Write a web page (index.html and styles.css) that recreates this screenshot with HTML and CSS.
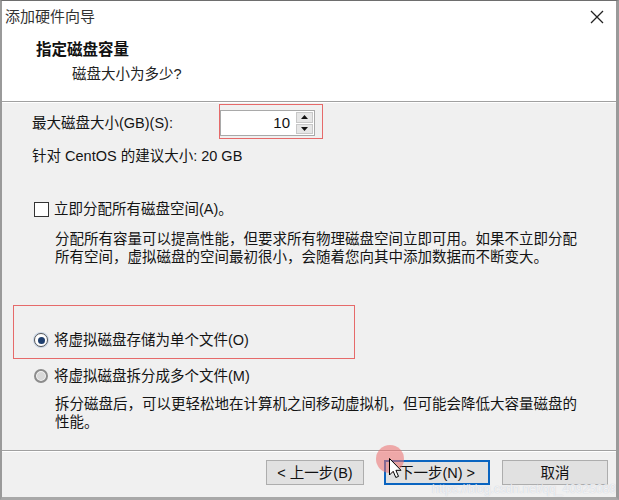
FILE: index.html
```html
<!DOCTYPE html>
<html lang="zh-CN">
<head>
<meta charset="utf-8">
<title>添加硬件向导</title>
<link rel="stylesheet" href="styles.css">
</head>
<body>
<div class="window">
  <div class="titlebar">
    <span class="title">添加硬件向导</span>
    <svg class="close" width="14" height="14" viewBox="0 0 14 14"><path d="M1 1 L13 13 M13 1 L1 13" stroke="#222" stroke-width="1.3" fill="none"/></svg>
  </div>
  <div class="header">
    <div class="h-title">指定磁盘容量</div>
    <div class="h-sub">磁盘大小为多少?</div>
  </div>
  <div class="content">
    <div class="size-row">
      <span class="size-label">最大磁盘大小(GB)(S):</span>
      <div class="spin">
        <div class="spin-input">10</div>
        <div class="spin-btns">
          <span class="spin-btn"><svg width="7" height="4" viewBox="0 0 7 4"><path d="M3.5 0 L7 4 L0 4 Z" fill="#111"/></svg></span>
          <span class="spin-btn"><svg width="7" height="4" viewBox="0 0 7 4"><path d="M0 0 L7 0 L3.5 4 Z" fill="#111"/></svg></span>
        </div>
      </div>
    </div>
    <div class="hint">针对 CentOS 的建议大小: 20 GB</div>
    <div class="check-row"><span class="checkbox"></span><span>立即分配所有磁盘空间(A)。</span></div>
    <p class="desc">分配所有容量可以提高性能，但要求所有物理磁盘空间立即可用。如果不立即分配<br>所有空间，虚拟磁盘的空间最初很小，会随着您向其中添加数据而不断变大。</p>
    <div class="radio-row first"><span class="radio checked"></span><span>将虚拟磁盘存储为单个文件(O)</span></div>
    <div class="radio-row second"><span class="radio"></span><span>将虚拟磁盘拆分成多个文件(M)</span></div>
    <p class="desc desc2">拆分磁盘后，可以更轻松地在计算机之间移动虚拟机，但可能会降低大容量磁盘的<br>性能。</p>
  </div>
  <div class="footer">
    <button class="btn back">&lt; 上一步(B)</button>
    <button class="btn next">下一步(N) &gt;</button>
    <button class="btn cancel">取消</button>
  </div>

  <div class="mark mark-spin"></div>
  <div class="mark mark-radio"></div>
  <div class="click-dot"></div>
  <svg class="cursor" width="14" height="21" viewBox="0 0 14 21"><path d="M0.5 0.5 L0.5 17 L4.2 13.3 L6.8 19.5 L9.5 18.4 L6.9 12.3 L12 12.3 Z" fill="#fff" stroke="#000" stroke-width="1" stroke-linejoin="miter"/></svg>
  <div class="watermark">https://blog.csdn.net/qq_40925089</div>
</div>
</body>
</html>
```
FILE: styles.css
```css
* { box-sizing: border-box; }
html, body { margin: 0; padding: 0; background: #f0f0f0; }
body {
  font-family: "Liberation Sans", "Noto Sans CJK SC", sans-serif;
  font-size: 14.5px;
  color: #141414;
}
.window {
  position: relative;
  width: 619px;
  height: 500px;
  display: flex;
  flex-direction: column;
  border-left: 2px solid #9a9a9a;
  border-right: 3px solid #9a9a9a;
  border-top: 1px solid #6e6e6e;
  border-bottom: 3px solid #a8a8a8;
  background: #f0f0f0;
  overflow: hidden;
}
.titlebar {
  height: 31px;
  background: #fff;
  display: flex;
  align-items: center;
  justify-content: space-between;
  padding: 0 12px 0 3px;
}
.title { font-size: 15px; color: #333; line-height: 31px; }
.close { display: block; margin-top: 1px; }
.header {
  background: #fff;
  padding: 8px 0 17px 34px;
}
.h-title { font-weight: bold; font-size: 15.5px; line-height: 20px; color: #111; }
.h-sub { margin-top: 4px; padding-left: 36px; line-height: 20px; color: #222; }
.content {
  flex: 1;
  border-top: 1px solid #a0a0a0;
  box-shadow: inset 0 1px 0 #fff;
  padding: 8px 0 0 30px;
}
.size-row {
  display: grid;
  grid-template-columns: 188px 95px;
  align-items: center;
}
.size-label { line-height: 20px; }
.spin {
  height: 26px;
  display: flex;
  border: 1px solid #a9a9a9;
  background: #fff;
}
.spin-input {
  flex: 1;
  text-align: right;
  padding-right: 6px;
  line-height: 24px;
  font-size: 15px;
  color: #111;
}
.spin-btns {
  width: 18px;
  display: flex;
  flex-direction: column;
  gap: 1px;
  padding: 1px 1px 1px 0;
  background: #fff;
}
.spin-btn {
  flex: 1;
  background: #e6e6e6;
  border: 1px solid #c8c8c8;
  display: flex;
  align-items: center;
  justify-content: center;
}
.spin-btn svg { display: block; }
.hint { margin-top: 10px; line-height: 20px; }
.check-row, .radio-row {
  display: flex;
  align-items: center;
  line-height: 20px;
}
.check-row { margin-top: 33px; gap: 5px; }
.checkbox {
  width: 15px; height: 15px;
  border: 1px solid #333;
  background: #fff;
  margin-left: 2px;
}
.desc {
  margin: 11px 0 0 23px;
  line-height: 18px;
  font-size: 14.5px;
  color: #141414;
}
.radio-row { gap: 6px; }
.radio-row.first { margin-top: 64px; }
.radio-row.second { margin-top: 16px; }
.radio {
  width: 14px; height: 14px;
  border-radius: 50%;
  border: 1px solid #7a7a7a;
  background: #fff;
  margin-left: 2px;
  display: flex;
  align-items: center;
  justify-content: center;
}
.radio.checked { border-color: #555; box-shadow: 0 0 0 1px #c9d6e6; }
.radio.checked::after {
  content: "";
  width: 7px; height: 7px;
  border-radius: 50%;
  background: #1f3f6e;
}
.radio-row.second .radio {
  background: #d9d9d9;
  border: 2px solid #8c8c8c;
  box-shadow: inset 0 0 0 1px #f6f6f6;
}
.desc2 { margin-top: 9px; }
.footer {
  height: 47px;
  border-top: 1px solid #a0a0a0;
  box-shadow: inset 0 1px 0 #fff;
  display: flex;
  justify-content: flex-end;
  align-items: flex-start;
  padding: 9px 8px 0 0;
  gap: 12px;
}
.btn {
  height: 25px;
  font-family: "Liberation Sans", "Noto Sans CJK SC", sans-serif;
  font-size: 14.5px;
  color: #111;
  background: #e1e1e1;
  border: 1px solid #adadad;
  padding: 0;
  line-height: 20px;
}
.btn.back { width: 98px; margin-right: 8px; }
.btn.next { width: 106px; border: 2px solid #0a64c0; }
.btn.cancel { width: 106px; }
.mark {
  position: absolute;
  border: 1px solid #e66a6a;
  pointer-events: none;
}
.mark-spin { left: 217px; top: 103px; width: 104px; height: 35px; }
.mark-radio { left: 11px; top: 304px; width: 342px; height: 54px; }
.click-dot {
  position: absolute;
  left: 374px; top: 444px;
  width: 28px; height: 28px;
  border-radius: 50%;
  background: rgba(236, 110, 110, 0.55);
}
.cursor { position: absolute; left: 387px; top: 457px; }
.watermark {
  position: absolute;
  left: 430px; top: 481px;
  font-size: 12px;
  line-height: 14px;
  color: rgba(255, 255, 255, 0.75);
  text-shadow: 0 0 1px rgba(120, 130, 160, 0.45);
  white-space: nowrap;
}
```
